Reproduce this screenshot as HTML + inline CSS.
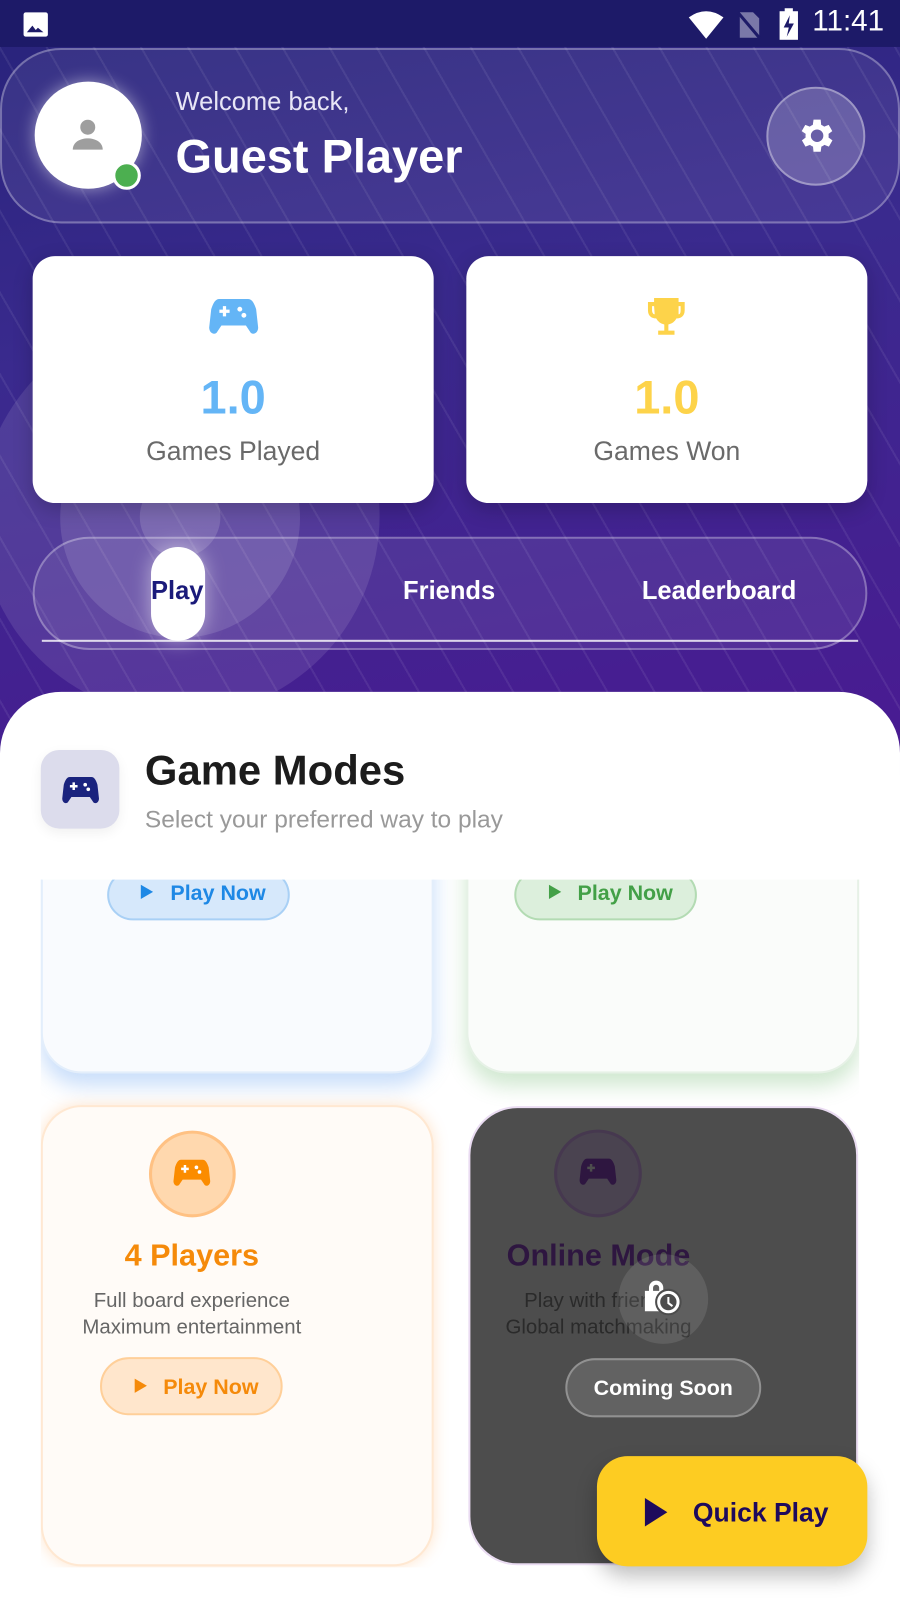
<!DOCTYPE html>
<html><head><meta charset="utf-8"><style>
*{box-sizing:border-box;margin:0;padding:0}
html,body{width:900px;height:1600px;overflow:hidden;background:#fff;font-family:"Liberation Sans",sans-serif}
#w{position:absolute;left:0;top:0;width:882px;height:1568px;transform:scale(1.020408);transform-origin:0 0;overflow:hidden;background:#fff}
.abs{position:absolute}
.bg{left:0;top:0;width:882px;height:760px;background:linear-gradient(170deg,#27237a 0%,#3a2a8e 40%,#4a1a92 100%)}
.lines{left:0;top:45px;width:882px;height:720px;background:repeating-linear-gradient(60deg,rgba(255,255,255,0) 0 38px,rgba(255,255,255,.07) 38px 40px)}
.status{left:0;top:0;width:882px;height:46px;background:#1d1a68}
.card{background:#fff;border-radius:22px;box-shadow:0 6px 20px rgba(0,0,0,.2);text-align:center}
.num{font-size:46px;font-weight:bold;position:absolute;left:0;width:100%;top:362px;text-align:center}
.lbl{font-size:26px;color:#6a6a6a;position:absolute;left:0;width:100%;top:427px;text-align:center}
.tab{color:#fff;font-weight:bold;font-size:25px;top:565px}
</style></head><body><div id="w">
<div class="abs bg"></div>
<div class="abs" style="left:-20px;top:310px;width:392px;height:392px;border-radius:50%;background:rgba(255,255,255,.10)"></div>
<div class="abs" style="left:59px;top:390px;width:235px;height:235px;border-radius:50%;background:rgba(255,255,255,.12)"></div>
<div class="abs" style="left:137px;top:467px;width:79px;height:79px;border-radius:50%;background:rgba(255,255,255,.14)"></div>
<div class="abs lines"></div>
<div class="abs status"></div>
<svg class="abs" style="left:22px;top:11px" width="26" height="26" viewBox="0 0 24 24"><rect x="1" y="1" width="22" height="22" rx="2" fill="#fff"/><path d="M4 19l5-6 3 4 2-2 5 4z" fill="#1d1a68"/></svg>
<svg class="abs" style="left:673px;top:9px" width="38" height="30" viewBox="0 0 38 30"><path d="M2 8Q19 -4 36 8L19 29Z" fill="#fff"/></svg>
<svg class="abs" style="left:720px;top:9px" width="28" height="30" viewBox="0 0 28 30"><path d="M5 3h13l6 6v19H5z" fill="#7a78a8"/><path d="M3 3l22 26" stroke="#1d1a68" stroke-width="3"/></svg>
<svg class="abs" style="left:762px;top:8px" width="22" height="32" viewBox="0 0 22 32"><rect x="7" y="0" width="8" height="4" fill="#fff"/><rect x="2" y="3" width="18" height="28" fill="#fff"/><path d="M12 7l-6 12h5l-2 9 7-13h-5z" fill="#1d1a68"/></svg>
<div class="abs" style="left:796px;top:5px;color:#fff;font-size:29px">11:41</div>
<div class="abs" style="left:0;top:47px;width:882px;height:172px;border-radius:60px;border:2px solid rgba(255,255,255,.3);background:rgba(255,255,255,.07)"></div>
<div class="abs" style="left:34px;top:80px;width:105px;height:105px;border-radius:50%;background:#fff;box-shadow:0 0 16px rgba(255,255,255,.5)"></div>
<svg class="abs" style="left:64px;top:110px" width="44" height="44" viewBox="0 0 24 24"><circle cx="12" cy="8" r="4" fill="#9e9e9e"/><path d="M4 20c0-4 4-6 8-6s8 2 8 6z" fill="#9e9e9e"/></svg>
<div class="abs" style="left:110px;top:158px;width:28px;height:28px;border-radius:50%;background:#4caf50;border:3px solid #fff"></div>
<div class="abs" style="left:172px;top:86px;color:#e8e6f6;font-size:25px">Welcome back,</div>
<div class="abs" style="left:172px;top:126px;color:#fff;font-size:46px;font-weight:bold">Guest Player</div>
<div class="abs" style="left:751px;top:85px;width:97px;height:97px;border-radius:50%;background:rgba(255,255,255,.2);border:2px solid rgba(255,255,255,.35)"></div>
<svg class="abs" style="left:778px;top:112px" width="42" height="42" viewBox="0 0 24 24"><path fill="#fff" d="M19.4 13a7.5 7.5 0 000-2l2.1-1.6-2-3.5-2.5 1a7.5 7.5 0 00-1.7-1L15 3h-4l-.4 2.9a7.5 7.5 0 00-1.7 1l-2.5-1-2 3.5L6.6 11a7.5 7.5 0 000 2l-2.1 1.6 2 3.5 2.5-1a7.5 7.5 0 001.7 1L11 21h4l.4-2.9a7.5 7.5 0 001.7-1l2.5 1 2-3.5zM13 15.5A3.5 3.5 0 1113 8.5a3.5 3.5 0 010 7z"/></svg>
<div class="abs card" style="left:32px;top:251px;width:393px;height:242px"></div>
<div class="abs card" style="left:457px;top:251px;width:393px;height:242px"></div>
<svg class="abs" style="left:203px;top:290px" width="52" height="42" viewBox="0 0 26 20"><path fill="#64b5f6" d="M6 1h14c2 0 3 2 4 5l1 9c0 3-3 4-4 2l-2-3H7l-2 3c-1 2-4 1-4-2l1-9c1-3 2-5 4-5z"/><path d="M6 7h5M8.5 4.5v5" stroke="#fff" stroke-width="1.6"/><circle cx="16" cy="6" r="1.2" fill="#fff"/><circle cx="18" cy="9" r="1.2" fill="#fff"/></svg>
<svg class="abs" style="left:628px;top:288px" width="50" height="48" viewBox="0 0 24 24"><path fill="#fdd34a" d="M6 2h12v2h3v4c0 3-2 4-4 4a6 6 0 01-4 3v3h3v2h-8v-2h3v-3a6 6 0 01-4-3c-2 0-4-1-4-4V4h3zM5 6v2c0 1 .5 2 1.3 2L6 6zm14 0h-1v4c.8 0 1-1 1-2z"/></svg>
<div class="abs" style="left:32px;top:0;width:393px;height:500px"><div class="num" style="color:#64b5f6">1.0</div><div class="lbl">Games Played</div></div>
<div class="abs" style="left:457px;top:0;width:393px;height:500px"><div class="num" style="color:#fdd34a">1.0</div><div class="lbl">Games Won</div></div>
<div class="abs" style="left:32px;top:526px;width:818px;height:111px;border-radius:56px;border:2px solid rgba(255,255,255,.3);background:rgba(255,255,255,.08)"></div>
<div class="abs" style="left:41px;top:627px;width:800px;height:2px;background:rgba(255,255,255,.8)"></div>
<div class="abs" style="left:148px;top:536px;width:53px;height:92px;border-radius:27px;background:#fff;box-shadow:0 0 20px rgba(255,255,255,.5)"></div>
<div class="abs tab" style="left:148px;color:#1a1a7a">Play</div>
<div class="abs tab" style="left:395px">Friends</div>
<div class="abs tab" style="left:629px">Leaderboard</div>
<div class="abs" style="left:0;top:678px;width:882px;height:900px;background:#fff;border-radius:60px 60px 0 0"></div>
<div class="abs" style="left:40px;top:735px;width:77px;height:77px;border-radius:18px;background:#dcdcec;box-shadow:0 4px 12px rgba(0,0,0,.06)"></div>
<svg class="abs" style="left:59px;top:760px" width="40" height="30" viewBox="0 0 26 20"><path fill="#1a237e" d="M6 1h14c2 0 3 2 4 5l1 9c0 3-3 4-4 2l-2-3H7l-2 3c-1 2-4 1-4-2l1-9c1-3 2-5 4-5z"/><path d="M6 7h5M8.5 4.5v5" stroke="#fff" stroke-width="1.6"/><circle cx="16" cy="6" r="1.2" fill="#fff"/><circle cx="18" cy="9" r="1.2" fill="#fff"/></svg>
<div class="abs" style="left:142px;top:732px;font-size:41px;font-weight:bold;color:#1c1c1c">Game Modes</div>
<div class="abs" style="left:142px;top:790px;font-size:24px;color:#999">Select your preferred way to play</div>
<div class="abs" style="left:40px;top:862px;width:802px;height:674px;overflow:hidden;background:#fff">
 <div class="abs" style="left:0;top:-60px;width:385px;height:250px;border-radius:0 0 40px 40px;border:2px solid #e3eefb;background:#f9fbfe;box-shadow:0 12px 20px rgba(100,160,240,.35)"></div>
 <div class="abs" style="left:417px;top:-60px;width:385px;height:250px;border-radius:0 0 40px 40px;border:2px solid #e6f1e6;background:#fafcfa;box-shadow:0 12px 20px rgba(100,180,100,.3)"></div>
 <div class="abs" style="left:65px;top:-10px;width:179px;height:50px;border-radius:25px;background:#d6e8fb;border:2px solid #a9d0f5;color:#1e88e5;font-weight:bold;font-size:21px;padding:10px 0 0 60px">Play Now</div>
 <div class="abs" style="left:98px;top:5px;width:0;height:0;border-left:12px solid #1e88e5;border-top:7px solid transparent;border-bottom:7px solid transparent"></div>
 <div class="abs" style="left:464px;top:-10px;width:179px;height:50px;border-radius:25px;background:#dcefdc;border:2px solid #b3dbb3;color:#43a047;font-weight:bold;font-size:21px;padding:10px 0 0 60px">Play Now</div>
 <div class="abs" style="left:498px;top:5px;width:0;height:0;border-left:12px solid #43a047;border-top:7px solid transparent;border-bottom:7px solid transparent"></div>
 <div class="abs" style="left:0;top:221px;width:385px;height:452px;border-radius:40px;border:2px solid #ffe8d2;background:#fffbf7;box-shadow:0 0 14px rgba(255,170,90,.3)"></div>
 <div class="abs" style="left:106px;top:246px;width:85px;height:85px;border-radius:50%;background:#ffd8ae;border:3px solid #ffc183"></div>
 <svg class="abs" style="left:128px;top:273px" width="40" height="30" viewBox="0 0 26 20"><path fill="#fb8c00" d="M6 1h14c2 0 3 2 4 5l1 9c0 3-3 4-4 2l-2-3H7l-2 3c-1 2-4 1-4-2l1-9c1-3 2-5 4-5z"/><path d="M6 7h5M8.5 4.5v5" stroke="#fff" stroke-width="1.6"/><circle cx="16" cy="6" r="1.2" fill="#fff"/><circle cx="18" cy="9" r="1.2" fill="#fff"/></svg>
 <div class="abs" style="left:0;top:352px;width:296px;text-align:center;font-size:30px;font-weight:bold;color:#f58a0a">4 Players</div>
 <div class="abs" style="left:0;top:400px;width:296px;text-align:center;font-size:20px;color:#666;line-height:26px">Full board experience<br>Maximum entertainment</div>
 <div class="abs" style="left:58px;top:468px;width:179px;height:57px;border-radius:29px;background:#ffe6cc;border:2px solid #ffcf99;color:#f58a0a;font-weight:bold;font-size:21px;padding:16px 0 0 60px">Play Now</div>
 <div class="abs" style="left:92px;top:489px;width:0;height:0;border-left:12px solid #f58a0a;border-top:7px solid transparent;border-bottom:7px solid transparent"></div>
 <div class="abs" style="left:419px;top:222px;width:382px;height:450px;border-radius:48px;background:#4d4d4d;border:2px solid #eadcf2"></div>
 <div class="abs" style="left:503px;top:245px;width:86px;height:86px;border-radius:50%;background:#4a4350;border:3px solid #46384f"></div>
 <svg class="abs" style="left:526px;top:272px" width="40" height="30" viewBox="0 0 26 20"><path fill="#2e1640" d="M6 1h14c2 0 3 2 4 5l1 9c0 3-3 4-4 2l-2-3H7l-2 3c-1 2-4 1-4-2l1-9c1-3 2-5 4-5z"/><path d="M6 7h5M8.5 4.5v5" stroke="#4d4d4d" stroke-width="1.6"/></svg>
 <div class="abs" style="left:419px;top:352px;width:255px;text-align:center;font-size:30px;font-weight:bold;color:#2e1640">Online Mode</div>
 <div class="abs" style="left:419px;top:400px;width:255px;text-align:center;font-size:20px;color:#2a2a2a;line-height:26px">Play with friends<br>Global matchmaking</div>
 <div class="abs" style="left:566px;top:367px;width:88px;height:88px;border-radius:50%;background:rgba(255,255,255,.1)"></div>
 <svg class="abs" style="left:588px;top:388px" width="44" height="42" viewBox="0 0 44 42"><path d="M8 12a7 7 0 0114 0v3h3v20H4V15h4zm4 0v3h6v-3a3 3 0 00-6 0z" fill="#fff"/><circle cx="27" cy="26" r="12" fill="#fff" stroke="#4d4d4d" stroke-width="2"/><circle cx="27" cy="26" r="8" fill="#4d4d4d"/><path d="M27 21v6l4 3" stroke="#fff" stroke-width="2" fill="none"/></svg>
 <div class="abs" style="left:514px;top:469px;width:192px;height:58px;border-radius:29px;background:rgba(255,255,255,.12);border:2px solid rgba(255,255,255,.3);color:#fff;font-weight:bold;font-size:21px;text-align:center;padding-top:16px">Coming Soon</div>
</div>
<div class="abs" style="left:585px;top:1427px;width:265px;height:108px;border-radius:30px;background:#fdcc22;box-shadow:0 10px 20px rgba(0,0,0,.25)"></div>
<div class="abs" style="left:632px;top:1468px;width:0;height:0;border-left:22px solid #1e0a5c;border-top:14px solid transparent;border-bottom:14px solid transparent"></div>
<div class="abs" style="left:679px;top:1467px;font-size:26px;font-weight:bold;color:#1e0a5c">Quick Play</div>
</div></body></html>
